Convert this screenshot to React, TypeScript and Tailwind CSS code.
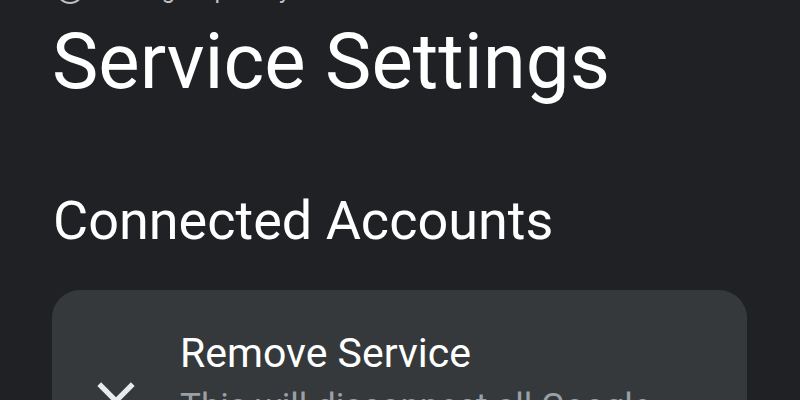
// Material "close" glyph — strokes match the reference better than lucide's X
function CloseIcon() {
  return (
    <svg viewBox="0 0 24 24" className="w-[64px] h-[64px] shrink-0 fill-[#e8eaed]">
      <path d="M19 6.41L17.59 5 12 10.59 6.41 5 5 6.41 10.59 12 5 17.59 6.41 19 12 13.41 17.59 19 19 17.59 13.41 12z" />
    </svg>
  )
}

export default function App() {
  return (
    <div className="h-[400px] overflow-hidden bg-[#202124] font-['Roboto','Noto_Sans',sans-serif]">
      {/* Toolbar, scrolled mostly out of view */}
      <div className="flex items-center gap-[16px] h-[32px] -mt-[26px] pl-[56px]">
        <div className="w-[28px] h-[28px] rounded-full border-2 border-[#bdc1c6]" />
        <span className="text-[24px] leading-[32px] text-[#bdc1c6]">Settings &amp; privacy</span>
      </div>

      <h1 className="mt-[9px] pl-[52px] text-[78px] leading-[94px] text-white">Service Settings</h1>

      <h2 className="mt-[79px] pl-[53px] text-[54px] leading-[66px] text-white">Connected Accounts</h2>

      <div className="mt-[36px] ml-[52px] w-[695px] rounded-[28px] bg-[#35393b] pt-[39px] pb-[32px] pl-[32px] pr-[32px]">
        <div className="flex items-start gap-[32px]">
          <div className="mt-[40px]">
            <CloseIcon />
          </div>
          <div className="flex flex-col">
            <span className="text-[41px] leading-[48px] text-white">Remove Service</span>
            <span className="mt-[6px] text-[35px] leading-[48px] text-[#9aa0a6]">
              This will disconnect all Google services from this account.
            </span>
          </div>
        </div>
      </div>
    </div>
  )
}
